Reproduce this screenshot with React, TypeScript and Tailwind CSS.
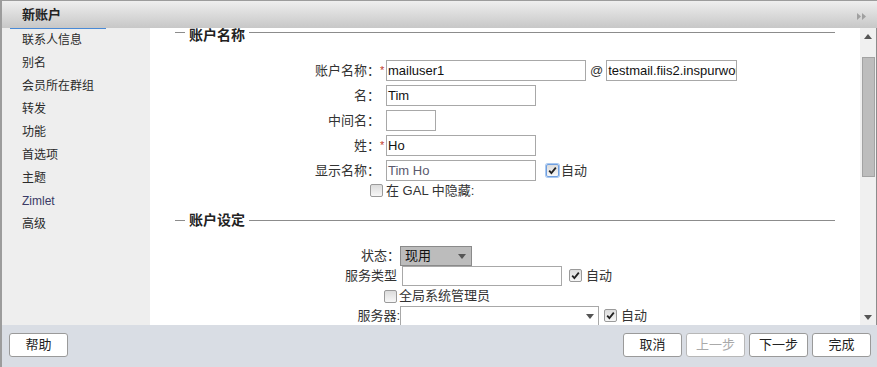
import React from "react"

const font = "font-['Liberation_Sans','Noto_Sans_CJK_SC',sans-serif]"

function Check({ checked, focus }: { checked?: boolean; focus?: boolean }) {
  return (
    <span
      className={`inline-flex w-[13px] h-[13px] shrink-0 items-center justify-center rounded-[2px] border bg-gradient-to-b from-[#dcdcdc] to-[#f7f7f7] ${
        focus ? "border-[#6f9fe0] shadow-[0_0_0_1px_#a9c8f0]" : "border-[#9a9a9a]"
      }`}
    >
      {checked && (
        <svg width="9" height="9" viewBox="0 0 9 9">
          <path d="M1.2 4.6 L3.4 7 L7.8 1.6" fill="none" stroke="#222" strokeWidth="1.8" />
        </svg>
      )}
    </span>
  )
}

function Legend({ title, top }: { title: string; top?: boolean }) {
  return (
    <div className={`mx-[25px] flex h-[14px] ${top ? "items-start" : "items-center"}`}>
      <div className={`h-px w-[10px] bg-[#8c8c8c] ${top ? "mt-[4px]" : ""}`} />
      <span className="px-[4px] text-[14px] font-bold leading-[14px] text-[#222]">{title}</span>
      <div className={`h-px flex-1 bg-[#8c8c8c] ${top ? "mt-[4px]" : ""}`} />
    </div>
  )
}

function Field({ width, value, muted }: { width: string; value?: string; muted?: boolean }) {
  return (
    <div
      className={`${width} h-[21px] border border-[#a8a8a8] bg-white pl-px text-[13px] leading-[19px] overflow-hidden whitespace-nowrap ${
        muted ? "text-[#5a5a6e]" : "text-[#111]"
      }`}
    >
      {value}
    </div>
  )
}

function Arrow({ dir }: { dir: "up" | "down" }) {
  return (
    <svg width="8" height="5" viewBox="0 0 8 5">
      <path d={dir === "up" ? "M0 5 L4 0 L8 5 Z" : "M0 0 L4 5 L8 0 Z"} fill="#555" />
    </svg>
  )
}

function Btn({ label, disabled }: { label: string; disabled?: boolean }) {
  return (
    <button
      className={`h-[24px] w-[59px] rounded-[3px] border bg-white text-[13px] ${
        disabled ? "border-[#b8b8b8] text-[#aaa]" : "border-[#9a9a9a] text-[#222]"
      }`}
    >
      {label}
    </button>
  )
}

const navItems = ["联系人信息", "别名", "会员所在群组", "转发", "功能", "首选项", "主题", "Zimlet", "高级"]

export default function App() {
  return (
    <div className={`w-[877px] h-[367px] flex flex-col border-l-2 border-t border-[#9c9c9c] bg-white ${font}`}>
      {/* Title bar */}
      <div className="h-[27px] flex items-center justify-between bg-gradient-to-b from-[#efefef] to-[#c7c7c7] pl-[20px] pr-[10px]">
        <span className="text-[13px] font-bold text-[#222]">新账户</span>
        <svg width="10" height="7" viewBox="0 0 10 7" className="mt-[3px]">
          <path d="M0 0 L4 3.5 L0 7 Z M5 0 L9 3.5 L5 7 Z" fill="#a0a0a0" />
        </svg>
      </div>

      {/* Body */}
      <div className="h-[297px] flex">
        {/* Side nav */}
        <div className="w-[148px] shrink-0 bg-[#eeeeee]">
          <div className="ml-[8px] h-px w-[96px] bg-[#4a8ad6]" />
          {navItems.map((item) => (
            <div
              key={item}
              className={`h-[23px] pl-[20px] text-[12px] leading-[23px] ${item === "Zimlet" ? "text-[#3a3a66]" : "text-[#2a2a2a]"}`}
            >
              {item}
            </div>
          ))}
        </div>

        {/* Content */}
        <div className="flex-1 overflow-hidden text-[13px] text-[#333]">
          <Legend title="账户名称" top />

          <div className="mt-[18px] flex flex-col gap-[4px]">
            <div className="flex items-center h-[21px]">
              <span className="w-[230px] text-right">账户名称：</span>
              <span className="w-[6px] text-[11px] text-[#c0392b]">*</span>
              <Field width="w-[200px]" value="mailuser1" />
              <span className="ml-[4px] mr-[3px] text-[13px]">@</span>
              <Field width="w-[131px]" value="testmail.fiis2.inspurworld.com" />
            </div>
            <div className="flex items-center h-[21px]">
              <span className="w-[230px] text-right">名：</span>
              <span className="w-[6px]" />
              <Field width="w-[150px]" value="Tim" />
            </div>
            <div className="flex items-center h-[21px]">
              <span className="w-[230px] text-right">中间名：</span>
              <span className="w-[6px]" />
              <Field width="w-[50px]" />
            </div>
            <div className="flex items-center h-[21px]">
              <span className="w-[230px] text-right">姓：</span>
              <span className="w-[6px] text-[11px] text-[#c0392b]">*</span>
              <Field width="w-[150px]" value="Ho" />
            </div>
            <div className="flex items-center h-[21px]">
              <span className="w-[230px] text-right">显示名称：</span>
              <span className="w-[6px]" />
              <Field width="w-[150px]" value="Tim Ho" muted />
              <span className="ml-[10px]">
                <Check checked focus />
              </span>
              <span className="ml-[2px]">自动</span>
            </div>
          </div>

          <div className="mt-[3px] flex h-[13px] items-center pl-[220px]">
            <Check />
            <span className="ml-[3px]">在 GAL 中隐藏:</span>
          </div>

          <div className="mt-[16px]">
            <Legend title="账户设定" />
          </div>

          <div className="mt-[19px] flex flex-col">
            <div className="flex h-[20px] items-center">
              <span className="w-[250px] text-right">状态：</span>
              <div className="flex h-[20px] w-[72px] items-center justify-between border border-[#8a8a8a] bg-[#bcbcbc] pl-[4px] pr-[5px] text-[#111]">
                <span>现用</span>
                <Arrow dir="down" />
              </div>
            </div>
            <div className="flex h-[20px] items-center">
              <span className="w-[247px] text-right">服务类型</span>
              <div className="ml-[5px] h-[20px] w-[160px] border border-[#a8a8a8] bg-white" />
              <span className="ml-[7px]">
                <Check checked />
              </span>
              <span className="ml-[4px]">自动</span>
            </div>
            <div className="flex h-[20px] items-center pl-[234px]">
              <Check />
              <span className="ml-[2px]">全局系统管理员</span>
            </div>
            <div className="flex h-[20px] items-center">
              <span className="w-[250px] text-right">服务器:</span>
              <div className="flex h-[20px] w-[199px] items-center justify-end border border-[#a8a8a8] bg-white pr-[4px]">
                <Arrow dir="down" />
              </div>
              <span className="ml-[5px]">
                <Check checked />
              </span>
              <span className="ml-[4px]">自动</span>
            </div>
          </div>
        </div>

        {/* Scrollbar */}
        <div className="w-[17px] shrink-0 flex flex-col items-center bg-[#f0f0f0] border-r border-[#8c8c8c]">
          <div className="pt-[6px] h-[29px]">
            <Arrow dir="up" />
          </div>
          <div className="h-[120px] w-[13px] border border-[#a3a3a3] bg-[#bdbdbd]" />
          <div className="flex-1" />
          <div className="pb-[5px]">
            <Arrow dir="down" />
          </div>
        </div>
      </div>

      {/* Footer */}
      <div className="h-[42px] flex items-start justify-between bg-[#d9dde4] pt-[8px] pl-[7px] pr-[6px]">
        <Btn label="帮助" />
        <div className="flex gap-[4px]">
          <Btn label="取消" />
          <Btn label="上一步" disabled />
          <Btn label="下一步" />
          <Btn label="完成" />
        </div>
      </div>
    </div>
  )
}
